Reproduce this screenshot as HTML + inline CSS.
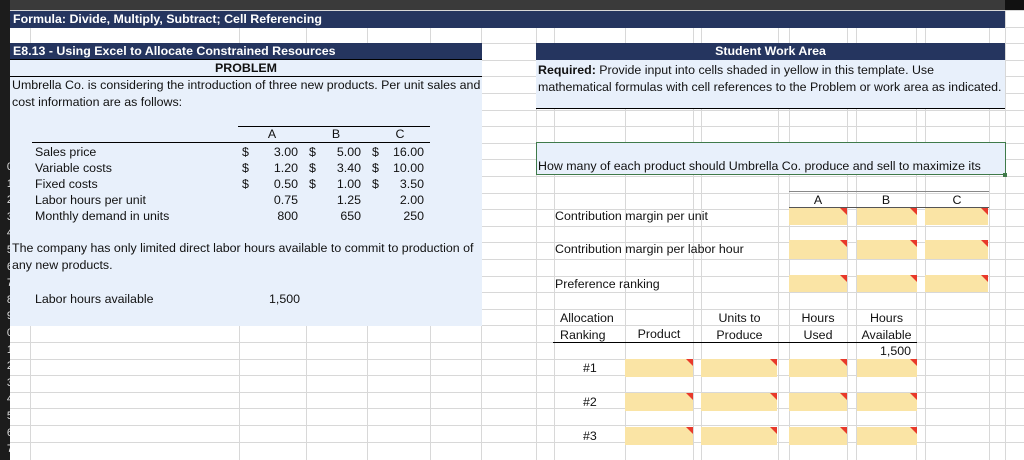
<!DOCTYPE html>
<html><head><meta charset="utf-8"><style>
*{margin:0;padding:0;box-sizing:border-box}
body{width:1024px;height:460px;overflow:hidden;background:#fff;font-family:"Liberation Sans",Arial,sans-serif;font-size:12.4px;color:#111;position:relative}
.a{position:absolute;white-space:nowrap}
.navy{background:#25355f;color:#fff;font-weight:bold}
.lb{background:#e8f0fb}
.y{position:absolute;background:#fae4a5}
.y:after{content:"";position:absolute;right:0;top:0;border-top:7px solid #e8392a;border-left:7px solid transparent}
.r{text-align:right}
.c{text-align:center}
</style></head><body>
<svg class="a" style="left:0;top:0" width="1024" height="460">
<g stroke="#d8d8d8" stroke-width="1">
<line x1="30.5" y1="0" x2="30.5" y2="460"/><line x1="239.5" y1="0" x2="239.5" y2="460"/><line x1="306.5" y1="0" x2="306.5" y2="460"/><line x1="367.5" y1="0" x2="367.5" y2="460"/><line x1="430.5" y1="0" x2="430.5" y2="460"/><line x1="481.5" y1="0" x2="481.5" y2="460"/><line x1="536.5" y1="0" x2="536.5" y2="460"/><line x1="554.5" y1="0" x2="554.5" y2="460"/><line x1="625.5" y1="0" x2="625.5" y2="460"/><line x1="693.5" y1="0" x2="693.5" y2="460"/><line x1="701.5" y1="0" x2="701.5" y2="460"/><line x1="778.5" y1="0" x2="778.5" y2="460"/><line x1="789.5" y1="0" x2="789.5" y2="460"/><line x1="847.5" y1="0" x2="847.5" y2="460"/><line x1="856.5" y1="0" x2="856.5" y2="460"/><line x1="916.5" y1="0" x2="916.5" y2="460"/><line x1="925.5" y1="0" x2="925.5" y2="460"/><line x1="989.5" y1="0" x2="989.5" y2="460"/><line x1="1005.5" y1="0" x2="1005.5" y2="460"/>
</g>
</svg>
<div id="hl"></div>
<script>
var s='';for(var r=1;r<28;r++){var y=Math.round(10+(r-1)*16.6);s+='<div class="a" style="left:10px;top:'+y+'px;width:1014px;height:1px;background:#d8d8d8"></div>';}
document.getElementById('hl').innerHTML=s;
</script>
<div class="a" style="left:0;top:0;width:1024px;height:10px;background:#3a3a3a"></div>
<div class="a" style="left:1005px;top:0;width:19px;height:10px;background:#111"></div>
<div class="a" style="left:0;top:0;width:10px;height:460px;background:#1c1c1c;overflow:hidden">
<div class="a" style="right:-3px;top:159px;font-size:11px;color:#ddd;line-height:16.6px;text-align:right">0<br>1<br>2<br>3<br>4<br>5<br>6<br>7<br>8<br>9<br>0<br>1<br>2<br>3<br>4<br>5<br>6<br>7</div></div>
<div class="a navy" style="left:10px;top:11px;width:995px;height:17px;padding-left:3px;line-height:17px;font-size:12.4px">Formula: Divide, Multiply, Subtract; Cell Referencing</div>
<div class="a lb" style="left:10px;top:43px;width:472px;height:283px"></div>
<div class="a navy" style="left:10px;top:43px;width:472px;height:17px;padding-left:3px;line-height:17px;border-bottom:1px solid #000">E8.13 - Using Excel to Allocate Constrained Resources</div>
<div class="a c" style="left:10px;top:60px;width:472px;font-weight:bold;line-height:16px;border-bottom:1px solid #000">PROBLEM</div>
<div class="a" style="left:12px;top:77px;line-height:16.6px">Umbrella Co. is considering the introduction of three new products. Per unit sales and<br>cost information are as follows:</div>
<div class="a" style="left:238px;top:126px;width:192px;height:1px;background:#000"></div>
<div class="a" style="left:32px;top:142px;width:398px;height:1px;background:#000"></div>
<div class="a c" style="left:262px;top:127px;width:20px">A</div>
<div class="a c" style="left:326px;top:127px;width:20px">B</div>
<div class="a c" style="left:390px;top:127px;width:20px">C</div>
<div class="a" style="left:35px;top:144px;line-height:16px">Sales price<br>Variable costs<br>Fixed costs<br>Labor hours per unit<br>Monthly demand in units</div>
<div class="a" style="left:242px;top:144px;line-height:16px">$<br>$<br>$</div>
<div class="a" style="left:309px;top:144px;line-height:16px">$<br>$<br>$</div>
<div class="a" style="left:372px;top:144px;line-height:16px">$<br>$<br>$</div>
<div class="a r" style="left:250px;top:144px;width:48px;line-height:16px">3.00<br>1.20<br>0.50<br>0.75<br>800</div>
<div class="a r" style="left:313px;top:144px;width:48px;line-height:16px">5.00<br>3.40<br>1.00<br>1.25<br>650</div>
<div class="a r" style="left:376px;top:144px;width:48px;line-height:16px">16.00<br>10.00<br>3.50<br>2.00<br>250</div>
<div class="a" style="left:12px;top:240px;line-height:17px">The company has only limited direct labor hours available to commit to production of<br>any new products.</div>
<div class="a" style="left:35px;top:292px">Labor hours available</div>
<div class="a" style="left:269px;top:292px">1,500</div>
<div class="a lb" style="left:536px;top:60px;width:469px;height:49px;border-bottom:1px solid #000"></div>
<div class="a navy c" style="left:536px;top:43px;width:469px;height:17px;line-height:17px">Student Work Area</div>
<div class="a" style="left:538px;top:62px;line-height:16.6px"><b>Required:</b> Provide input into cells shaded in yellow in this template. Use<br>mathematical formulas with cell references to the Problem or work area as indicated.</div>
<div class="a lb" style="left:536px;top:142px;width:470px;height:33px;border:1px solid #3f7a4a"></div>
<div class="a" style="left:538px;top:159px">How many of each product should Umbrella Co. produce and sell to maximize its</div>
<div class="a" style="left:1003px;top:173px;width:4px;height:4px;background:#3f7a4a"></div>
<div class="a" style="left:789px;top:191px;width:200px;height:1px;background:#888"></div>
<div class="a" style="left:789px;top:207px;width:200px;height:1px;background:#555"></div>
<div class="a c" style="left:789px;top:193px;width:58px">A</div>
<div class="a c" style="left:856px;top:193px;width:60px">B</div>
<div class="a c" style="left:925px;top:193px;width:64px">C</div>
<div class="a" style="left:555px;top:209px">Contribution margin per unit</div>
<div class="a" style="left:555px;top:242px">Contribution margin per labor hour</div>
<div class="a" style="left:555px;top:277px">Preference ranking</div>
<div class="y" style="left:789px;top:208px;width:58px;height:17px"></div><div class="y" style="left:857px;top:208px;width:60px;height:17px"></div><div class="y" style="left:925px;top:208px;width:63px;height:17px"></div>
<div class="y" style="left:789px;top:240px;width:58px;height:19px"></div><div class="y" style="left:857px;top:240px;width:60px;height:19px"></div><div class="y" style="left:925px;top:240px;width:63px;height:19px"></div>
<div class="y" style="left:789px;top:275px;width:58px;height:17px"></div><div class="y" style="left:857px;top:275px;width:60px;height:17px"></div><div class="y" style="left:925px;top:275px;width:63px;height:17px"></div>
<div class="a" style="left:560px;top:310px;line-height:17px">Allocation<br>Ranking</div>
<div class="a c" style="left:625px;top:327px;width:68px">Product</div>
<div class="a c" style="left:701px;top:310px;width:77px;line-height:17px">Units to<br>Produce</div>
<div class="a c" style="left:789px;top:310px;width:58px;line-height:17px">Hours<br>Used</div>
<div class="a c" style="left:856px;top:310px;width:61px;line-height:17px">Hours<br>Available</div>
<div class="a" style="left:553px;top:342px;width:364px;height:1px;background:#000"></div>
<div class="a r" style="left:856px;top:344px;width:55px">1,500</div>
<div class="a" style="left:583px;top:361px">#1</div>
<div class="a" style="left:583px;top:395px">#2</div>
<div class="a" style="left:583px;top:429px">#3</div>
<div class="y" style="left:625px;top:359px;width:68px;height:18px"></div><div class="y" style="left:701px;top:359px;width:76px;height:18px"></div><div class="y" style="left:789px;top:359px;width:58px;height:18px"></div><div class="y" style="left:857px;top:359px;width:60px;height:18px"></div>
<div class="y" style="left:625px;top:393px;width:68px;height:18px"></div><div class="y" style="left:701px;top:393px;width:76px;height:18px"></div><div class="y" style="left:789px;top:393px;width:58px;height:18px"></div><div class="y" style="left:857px;top:393px;width:60px;height:18px"></div>
<div class="y" style="left:625px;top:427px;width:68px;height:18px"></div><div class="y" style="left:701px;top:427px;width:76px;height:18px"></div><div class="y" style="left:789px;top:427px;width:58px;height:18px"></div><div class="y" style="left:857px;top:427px;width:60px;height:18px"></div>
</body></html>
